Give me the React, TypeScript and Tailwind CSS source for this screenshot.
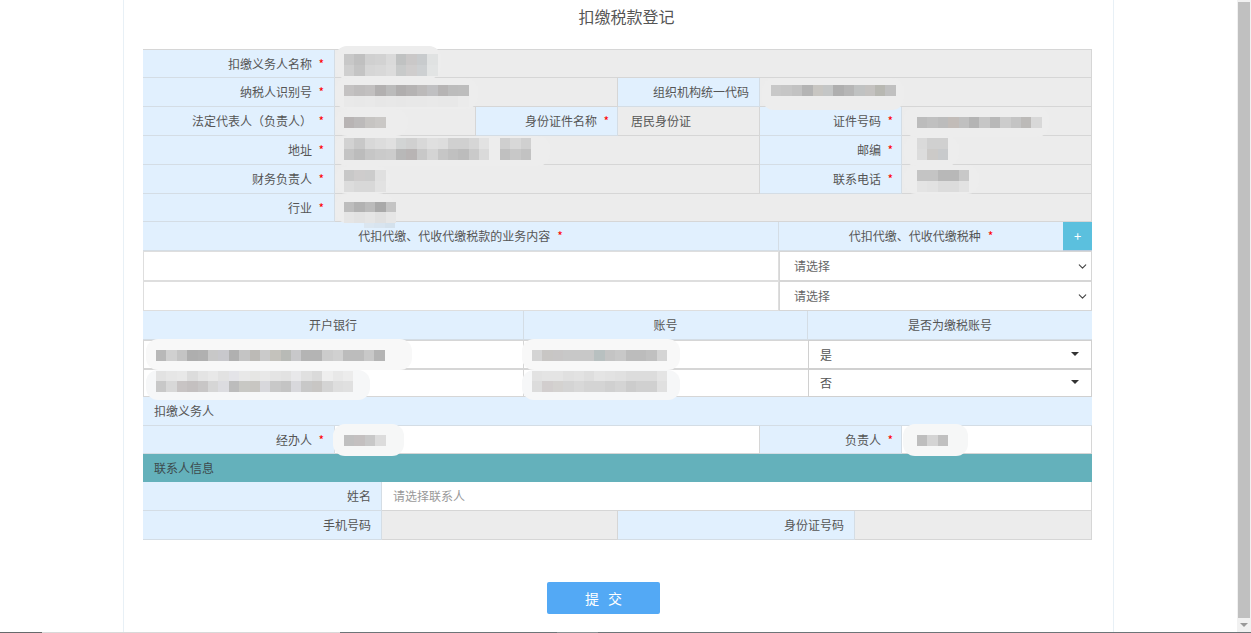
import type { ReactNode } from "react";
import { ChevronDown } from "lucide-react";

const font = "font-['Noto_Sans_CJK_SC','Liberation_Sans',sans-serif]";

function Label({ w, star, first, children }: { w: string; star?: boolean; first?: boolean; children: ReactNode }) {
  const pad = !star ? "pr-[10px]" : first ? "pr-[22px]" : "pr-[20px]";
  return (
    <div
      className={`relative flex h-full shrink-0 items-center justify-end border-r border-b border-[#d4dde5] bg-[#e1f0fe] ${pad} ${w}`}
    >
      {children}
      {star && (
        <span className={`absolute top-[5px] text-[12px] text-[#f00] ${first ? "right-[10px]" : "right-[8px]"}`}>*</span>
      )}
    </div>
  );
}

function Value({ w, white, children }: { w: string; white?: boolean; children?: ReactNode }) {
  return (
    <div
      className={`flex h-full shrink-0 items-center border-r border-b border-[#d6d6d6] px-[13px] ${
        white ? "bg-white" : "bg-[#ececec]"
      } ${w}`}
    >
      {children}
    </div>
  );
}

type Patch = {
  x: number;
  y: number;
  w: number;
  h: number;
  bg?: string;
  cells: { x: number; y: number; h?: number; c: string[] }[];
};

// mosaic blocks that hide the private values
const patches: Patch[] = [
  { x: 335, y: 46, w: 106, h: 33, cells: [
    { x: 344, y: 54, c: ["#c8c8c8", "#c0c0c0", "#d0d0d0", "#d2d2d2", "#dadada", "#c0c2c2", "#cac8c8", "#c8cbcd", "#e0e2e2"] },
    { x: 344, y: 65, c: ["#cfcfcf", "#c4c4c4", "#d6d6d6", "#d8d8d8", "#dcdcdc", "#c8caca", "#cfcdcd", "#cdd0d2", "#e2e4e4"] },
  ] },
  { x: 335, y: 78, w: 143, h: 31, cells: [
    { x: 344, y: 85, c: ["#c4c2c2", "#bfbdbd", "#c2c0c0", "#b2b0b0", "#bbbbbb", "#b0aeae", "#b5b3b3", "#bcbaba", "#c0c0c2", "#b6b4b4", "#bcbcbc", "#bdbdbd"] },
    { x: 344, y: 96, c: ["#e9e9e9", "#e8e8e8", "#e9e9e9", "#e7e7e7", "#e8e8e8", "#e7e7e7", "#e8e8e8", "#e8e8e8", "#e9e9e9", "#e8e8e8", "#e8e8e8", "#ebebeb"] },
  ] },
  { x: 335, y: 109, w: 73, h: 27, cells: [
    { x: 344, y: 117, c: ["#b8b4b4", "#bcbaba", "#c6c4c2", "#cac8c6"] },
  ] },
  { x: 335, y: 136, w: 215, h: 30, cells: [
    { x: 344, y: 138, c: ["#d2d2d2", "#c8c8c8", "#d8d8d8", "#dcdcdc", "#e0e0e0", "#d2d4d4", "#d0d0d0", "#d8d8d8", "#dfdfdf", "#dddddd", "#d0d0d0", "#d0d0d0", "#d6d6d6", "#e2e2e2"] },
    { x: 344, y: 149, c: ["#c4c4c4", "#bcbcbc", "#c6c6c6", "#cacaca", "#cccccc", "#b8b8b8", "#b8b4b4", "#c8c8c8", "#d4d4d4", "#c6c6c6", "#c0c0c0", "#bcbcbc", "#cacaca", "#dadada"] },
    { x: 500, y: 138, c: ["#cfcfcf", "#d8d8d8", "#d0d0d0"] },
    { x: 500, y: 149, c: ["#c0c0c0", "#c8c8c8", "#c2c2c2"] },
  ] },
  { x: 335, y: 166, w: 55, h: 28, cells: [
    { x: 344, y: 170, c: ["#c8c8c8", "#cecccc", "#cccccc", "#e0e0e0"] },
    { x: 344, y: 181, c: ["#dcdcdc", "#d8d8d8", "#d8d8d8", "#e2e2e2"] },
  ] },
  { x: 335, y: 194, w: 60, h: 29, cells: [
    { x: 344, y: 202, c: ["#bdbdbd", "#b2b2b2", "#bbbbbb", "#a9a9a9", "#c4c4c4"] },
    { x: 344, y: 212, c: ["#e5e5e5", "#e2e2e2", "#e5e5e5", "#e0e0e0", "#e6e6e6"] },
    { x: 364, y: 223, h: 5, c: ["#dbe6f0", "#d8e4ef", "#d4e1ec"] },
  ] },
  { x: 762, y: 78, w: 142, h: 32, cells: [
    { x: 771, y: 85, c: ["#c8c8c8", "#c6c6c6", "#c2c2c2", "#b4b4b4", "#c8c6c2", "#c4c6c6", "#afafaf", "#b6b6b6", "#c0c2c2", "#c4c2c0", "#b8b8b2", "#c0c0c0"] },
  ] },
  { x: 904, y: 107, w: 145, h: 30, cells: [
    { x: 917, y: 117, c: ["#bcbcbc", "#c0c0c0", "#bcbcbc", "#c2bcb8", "#c0c0c0", "#b4b4b4", "#c6c6c6", "#b8b8b8", "#cccccc", "#c4c4c4", "#bcbab8", "#d8d8d8"] },
  ] },
  { x: 904, y: 136, w: 55, h: 30, cells: [
    { x: 917, y: 138, c: ["#dadada", "#d0d0d0", "#d0d0d0"] },
    { x: 917, y: 149, c: ["#dcdcdc", "#cccac8", "#c8cacc"] },
  ] },
  { x: 904, y: 165, w: 75, h: 29, cells: [
    { x: 917, y: 170, c: ["#c4c4c4", "#c4c4c4", "#b8b8b8", "#b8b8b8", "#c8c8c8"] },
    { x: 917, y: 181, c: ["#e4e4e4", "#e2e2e2", "#dcdcdc", "#dcdcdc", "#e2e2e2"] },
  ] },
  { x: 146, y: 339, w: 266, h: 31, bg: "#f8f8f8", cells: [
    { x: 156, y: 350, c: ["#b8b8b8", "#d0d0d0", "#c4c4c4", "#aeaeae", "#b0b0b0", "#c8c8c8", "#c8c8cc", "#b0b0b0", "#c4c4c4", "#bcbab6", "#cacaca", "#c4c2bc", "#b8bab6", "#c8c8ca", "#b4b4b4", "#b4b4b4", "#cccccc", "#d0d0d0", "#bcbcbc", "#bcbcbc", "#c8c8c8", "#b4b4b4"] },
  ] },
  { x: 146, y: 370, w: 224, h: 30, bg: "#f6f7f8", cells: [
    { x: 156, y: 371, c: ["#e2e2e2", "#e6e6e6", "#e8e8e8", "#dcdcdc", "#e4e4e4", "#e8e8e8", "#e2e2e2", "#e4e4e8", "#e8e8e8", "#e6e6e4", "#e8e8e8", "#e4e4e4", "#e2e2e2", "#e8e8ea", "#e0e0e0", "#dadada", "#eeeeee", "#e8e8e8", "#ececec"] },
    { x: 156, y: 381, c: ["#c8c8c8", "#d8d8d8", "#c8c4c4", "#c4c0c0", "#c8c6c6", "#d6d6d6", "#dcdce0", "#bcbcbc", "#c8c8c4", "#c8c6c2", "#d8d8dc", "#c8c8c8", "#c4c4c4", "#d8d8dc", "#c8c8c8", "#c8c6c4", "#d4d4d4", "#dedede", "#e0e0e0"] },
  ] },
  { x: 522, y: 339, w: 158, h: 31, bg: "#f8f8f8", cells: [
    { x: 532, y: 350, c: ["#d4d4d4", "#c8c6c4", "#c8c6c6", "#c8c8c8", "#c8c8c8", "#c8c8c8", "#b8c0c0", "#c4c4c4", "#c8c8c8", "#bcbcbc", "#bcbcbc", "#c0c0c0", "#d4d4d4"] },
  ] },
  { x: 522, y: 370, w: 158, h: 30, bg: "#f6f7f8", cells: [
    { x: 532, y: 371, c: ["#e2e2e2", "#e4e4e4", "#e4e4e4", "#e0e0e0", "#e2e2e2", "#dedede", "#e4e4e4", "#e2e2e2", "#e0e0e0", "#dcdcdc", "#dcdcdc", "#dcdcdc", "#e4e4e4"] },
    { x: 532, y: 381, c: ["#dcdcdc", "#d2cece", "#d4d2d0", "#d4d4d4", "#d8d8d8", "#d4d4d4", "#d4d4d4", "#d0d0d0", "#d4d4d4", "#cccccc", "#d0d0d0", "#d0d0d0", "#e0e0e0"] },
  ] },
  { x: 333, y: 424, w: 71, h: 32, bg: "#f6f7f7", cells: [
    { x: 344, y: 435, c: ["#c0c0c0", "#c4c0c0", "#c8c8c8", "#dcdcdc"] },
  ] },
  { x: 903, y: 424, w: 65, h: 32, bg: "#f6f7f7", cells: [
    { x: 917, y: 435, c: ["#bebebe", "#d4d4d4", "#c0c0c0"] },
  ] },
];

function Redact({ p }: { p: Patch }) {
  return (
    <>
      <div
        className="absolute rounded-[12px] bg-[#ededed]"
        style={{ left: p.x - 124, top: p.y, width: p.w, height: p.h, backgroundColor: p.bg }}
      />
      {p.cells.map((row, i) => (
        <div key={i} className="absolute flex" style={{ left: row.x - 124, top: row.y, height: row.h ?? 11 }}>
          {row.c.map((c, j) => (
            <div key={j} className="h-full w-[10.4px]" style={{ backgroundColor: c }} />
          ))}
        </div>
      ))}
    </>
  );
}

function NativeSelect({ w }: { w: string }) {
  return (
    <div className={`flex h-full shrink-0 items-center justify-between border-[1.5px] border-[#d6d6d6] bg-white pl-[14px] pr-[2px] text-[#666] ${w}`}>
      <span>请选择</span>
      <ChevronDown size={13} strokeWidth={2} className="text-[#444]" />
    </div>
  );
}

function Select2({ w, text }: { w: string; text: string }) {
  return (
    <div className={`flex h-full shrink-0 items-center justify-between border-[1.5px] border-[#d0d0d0] bg-white pl-[11px] pr-[12px] ${w}`}>
      <span>{text}</span>
      <span className="mb-[2px] h-0 w-0 border-x-[4px] border-t-[4px] border-x-transparent border-t-[#333]" />
    </div>
  );
}

function Form() {
  return (
    <div className="flex w-[949px] shrink-0 flex-col">
      <div className="flex h-[29px] border-t border-[#d6d6d6]">
        <Label w="w-[192px]" star first>扣缴义务人名称</Label>
        <Value w="w-[757px]" />
      </div>
      <div className="flex h-[29px]">
        <Label w="w-[192px]" star first>纳税人识别号</Label>
        <Value w="w-[283px]" />
        <Label w="w-[142px]">组织机构统一代码</Label>
        <Value w="w-[332px]" />
      </div>
      <div className="flex h-[29px]">
        <Label w="w-[192px]" star first>法定代表人（负责人）</Label>
        <Value w="w-[141px]" />
        <Label w="w-[142px]" star>身份证件名称</Label>
        <Value w="w-[142px]">居民身份证</Value>
        <Label w="w-[142px]" star>证件号码</Label>
        <Value w="w-[190px]" />
      </div>
      <div className="flex h-[29px]">
        <Label w="w-[192px]" star first>地址</Label>
        <Value w="w-[425px]" />
        <Label w="w-[142px]" star>邮编</Label>
        <Value w="w-[190px]" />
      </div>
      <div className="flex h-[29px]">
        <Label w="w-[192px]" star first>财务负责人</Label>
        <Value w="w-[425px]" />
        <Label w="w-[142px]" star>联系电话</Label>
        <Value w="w-[190px]" />
      </div>
      <div className="flex h-[28px]">
        <Label w="w-[192px]" star first>行业</Label>
        <Value w="w-[757px]" />
      </div>

      <div className="flex h-[29px] text-center">
        <div className="flex h-full w-[636px] items-center justify-center border-r border-b border-[#d4dde5] bg-[#e1f0fe]">
          代扣代缴、代收代缴税款的业务内容<span className="ml-[7px] text-[#f00]">*</span>
        </div>
        <div className="flex h-full w-[284px] items-center justify-center border-b border-[#d4dde5] bg-[#e1f0fe]">
          代扣代缴、代收代缴税种<span className="ml-[7px] text-[#f00]">*</span>
        </div>
        <div className="flex h-full w-[29px] items-center justify-center border-b border-[#bcd] bg-[#5bc0de] text-[13px] text-white">+</div>
      </div>
      <div className="flex h-[30px]">
        <div className="h-full w-[636px] border-[1.5px] border-[#dedede] bg-white" />
        <NativeSelect w="w-[313px]" />
      </div>
      <div className="flex h-[30px]">
        <div className="h-full w-[636px] border-[1.5px] border-[#dedede] bg-white" />
        <NativeSelect w="w-[313px]" />
      </div>

      <div className="flex h-[29px] text-center">
        <div className="flex h-full w-[381px] items-center justify-center border-r border-b border-[#d4dde5] bg-[#e1f0fe]">开户银行</div>
        <div className="flex h-full w-[284px] items-center justify-center border-r border-b border-[#d4dde5] bg-[#e1f0fe]">账号</div>
        <div className="flex h-full w-[284px] items-center justify-center border-b border-[#d4dde5] bg-[#e1f0fe]">是否为缴税账号</div>
      </div>
      <div className="flex h-[29px]">
        <div className="h-full w-[381px] border border-[#d6d6d6] bg-white" />
        <div className="h-full w-[284px] border-y border-[#d6d6d6] bg-white" />
        <Select2 w="w-[284px]" text="是" />
      </div>
      <div className="flex h-[28px]">
        <div className="h-full w-[381px] border border-[#d6d6d6] bg-white" />
        <div className="h-full w-[284px] border-y border-[#d6d6d6] bg-white" />
        <Select2 w="w-[284px]" text="否" />
      </div>

      <div className="flex h-[29px] items-center border-b border-[#d4dde5] bg-[#e1f0fe] pl-[11px]">扣缴义务人</div>
      <div className="flex h-[28px]">
        <Label w="w-[192px]" star first>经办人</Label>
        <Value w="w-[425px]" white />
        <Label w="w-[142px]" star>负责人</Label>
        <Value w="w-[190px]" white />
      </div>
      <div className="flex h-[28px] items-center bg-[#64b1bb] pl-[11px] text-[#3d4a4d]">联系人信息</div>
      <div className="flex h-[29px]">
        <Label w="w-[239px]">姓名</Label>
        <div className="flex h-full w-[710px] items-center border-r border-b border-[#d6d6d6] bg-white pl-[11px] text-[#999]">请选择联系人</div>
      </div>
      <div className="flex h-[29px]">
        <Label w="w-[239px]">手机号码</Label>
        <Value w="w-[236px]" />
        <Label w="w-[237px]">身份证号码</Label>
        <Value w="w-[237px]" />
      </div>
    </div>
  );
}

export default function App() {
  return (
    <div className={`flex h-[633px] w-[1251px] flex-col overflow-hidden bg-white text-[12px] text-[#555] ${font}`}>
      <div className="flex h-[632px] shrink-0">
        <div className="w-[1237px] shrink-0">
          <div className="relative ml-[123px] flex h-full w-[991px] flex-col border-x border-[#e8f0f6] px-[19px]">
            <h1 className="flex h-[49px] shrink-0 items-start justify-center pl-[16px] pt-[6px] text-[16px] font-normal leading-[20px] text-[#555]">
              扣缴税款登记
            </h1>
            <Form />
            <button className="ml-[404px] mt-[42px] flex h-[32px] w-[113px] shrink-0 items-center justify-center rounded-[2px] bg-[#53a9f5] pl-[9px] text-[14px] tracking-[9px] text-white">
              提交
            </button>
            {patches.map((p, i) => (
              <Redact key={i} p={p} />
            ))}
          </div>
        </div>
        <div className="flex w-[14px] shrink-0 flex-col items-center bg-[#f1f1f1]">
          <div className="mt-[2px] h-[616px] w-[12px] bg-[#c0c0c0]" />
          <div className="mt-[5px] h-0 w-0 border-x-[4px] border-t-[4px] border-x-transparent border-t-[#999]" />
        </div>
      </div>
      {/* window edge along the bottom */}
      <div className="flex h-[1px] shrink-0">
        <div className="w-[42px] bg-[#666a6c]" />
        <div className="w-[298px] bg-[#d9d9d9]" />
        <div className="w-[217px] bg-[#6d7578]" />
        <div className="w-[41px] bg-[#8a9294]" />
        <div className="flex-1 bg-[#6d7578]" />
      </div>
    </div>
  );
}
